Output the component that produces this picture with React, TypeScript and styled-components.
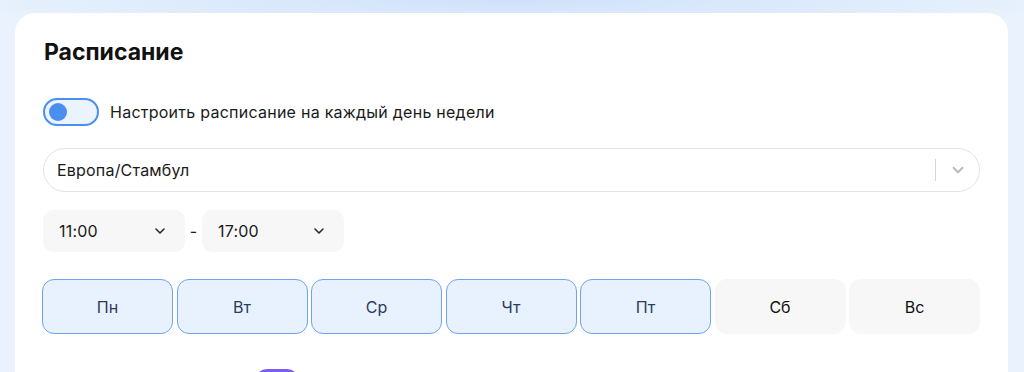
import React, { useState } from "react";
import styled, { createGlobalStyle } from "styled-components";

const Global = createGlobalStyle`
  html, body { margin: 0; padding: 0; }
  body {
    font-family: Inter, "Noto Sans", "Liberation Sans", sans-serif;
    background: #e9f2fd;
    overflow: hidden;
  }
`;

const Page = styled.div`
  height: 372px;
  overflow: hidden;
  padding: 13px 16px 0 15px;
  box-sizing: border-box;
  background:
    radial-gradient(ellipse 560px 40px at 50% 0, #cfe1fa 0%, rgba(207,225,250,0) 100%),
    #e9f2fd;
`;

const Card = styled.section`
  background: #fff;
  border-radius: 20px;
  padding: 25px 28px 40px 28px;
  display: flex;
  flex-direction: column;
  min-height: 500px;
  box-sizing: border-box;
`;

const Title = styled.h2`
  margin: 0 0 0 1px;
  font-size: 23px;
  line-height: 28px;
  font-weight: 700;
  color: #111;
`;

const ToggleRow = styled.label`
  display: flex;
  align-items: center;
  gap: 11px;
  margin-top: 32px;
  font-size: 16px;
  letter-spacing: 0.25px;
  color: #1a1a1a;
`;

const Switch = styled.span<{ $color?: string }>`
  width: 56px;
  height: 28px;
  box-sizing: border-box;
  border-radius: 14px;
  border: 2px solid ${(p) => p.$color || "#4a8ef0"};
  background: #eaf3fe;
  display: flex;
  align-items: center;
  padding: 0 4px;
  flex-shrink: 0;
  &::before {
    content: "";
    width: 18px;
    height: 18px;
    border-radius: 50%;
    background: ${(p) => p.$color || "#4a8ef0"};
  }
`;

const Select = styled.div`
  margin-top: 22px;
  height: 44px;
  box-sizing: border-box;
  border: 1px solid #e3e3e3;
  border-radius: 22px;
  display: flex;
  align-items: center;
  padding: 0 12px 0 13px;
  font-size: 16px;
  letter-spacing: 0.2px;
  color: #1a1a1a;
`;

const SelectValue = styled.span`
  flex: 1;
`;

const Divider = styled.span`
  width: 1px;
  height: 22px;
  background: #d6d6d6;
  margin-right: 13px;
`;

const Chevron = ({ color, size = 16 }: { color: string; size?: number }) => (
  <svg width={size} height={size} viewBox="0 0 16 16" fill="none">
    <path d="M4 6l4 4 4-4" stroke={color} strokeWidth="1.6" strokeLinecap="round" strokeLinejoin="round" />
  </svg>
);

const TimeRow = styled.div`
  margin-top: 18px;
  display: flex;
  align-items: center;
`;

const TimeBox = styled.div`
  width: 142px;
  height: 42px;
  box-sizing: border-box;
  background: #f7f7f7;
  border-radius: 10px;
  display: flex;
  align-items: center;
  justify-content: space-between;
  padding: 0 17px 0 16px;
  font-size: 16px;
  letter-spacing: 0.2px;
  color: #1a1a1a;
`;

const Dash = styled.span`
  width: 17px;
  text-align: center;
  font-size: 16px;
  color: #1a1a1a;
`;

const Days = styled.div`
  margin-top: 27px;
  margin-left: -1px;
  display: grid;
  grid-template-columns: repeat(7, 1fr);
  gap: 3.5px;
`;

const Day = styled.button<{ $active?: boolean }>`
  height: 55px;
  border-radius: 12px;
  font-family: inherit;
  font-size: 16px;
  cursor: pointer;
  border: 1.5px solid ${(p) => (p.$active ? "#6fa3f2" : "transparent")};
  background: ${(p) => (p.$active ? "#e8f2fe" : "#f7f7f7")};
  color: ${(p) => (p.$active ? "#2c3c5c" : "#111")};
  padding: 0;
`;

const BottomRow = styled.div`
  margin-top: 35px;
  display: flex;
  align-items: center;
  padding-left: 212px;
`;

const PurpleSwitch = styled.span`
  width: 44px;
  height: 24px;
  border-radius: 12px;
  background: #7a5df2;
`;

const days = [
  { n: "Пн", a: true },
  { n: "Вт", a: true },
  { n: "Ср", a: true },
  { n: "Чт", a: true },
  { n: "Пт", a: true },
  { n: "Сб", a: false },
  { n: "Вс", a: false },
];

export default function App() {
  const [sel, setSel] = useState(days);
  return (
    <Page>
      <Global />
      <Card>
        <Title>Расписание</Title>
        <ToggleRow>
          <Switch />
          Настроить расписание на каждый день недели
        </ToggleRow>
        <Select>
          <SelectValue>Европа/Стамбул</SelectValue>
          <Divider />
          <Chevron color="#b8b8b8" size={18} />
        </Select>
        <TimeRow>
          <TimeBox>
            11:00
            <Chevron color="#2a2a2a" />
          </TimeBox>
          <Dash>-</Dash>
          <TimeBox>
            17:00
            <Chevron color="#2a2a2a" />
          </TimeBox>
        </TimeRow>
        <Days>
          {sel.map((d, i) => (
            <Day
              key={d.n}
              $active={d.a}
              onClick={() => setSel(sel.map((x, j) => (j === i ? { ...x, a: !x.a } : x)))}
            >
              {d.n}
            </Day>
          ))}
        </Days>
        <BottomRow>
          <PurpleSwitch />
        </BottomRow>
      </Card>
    </Page>
  );
}
